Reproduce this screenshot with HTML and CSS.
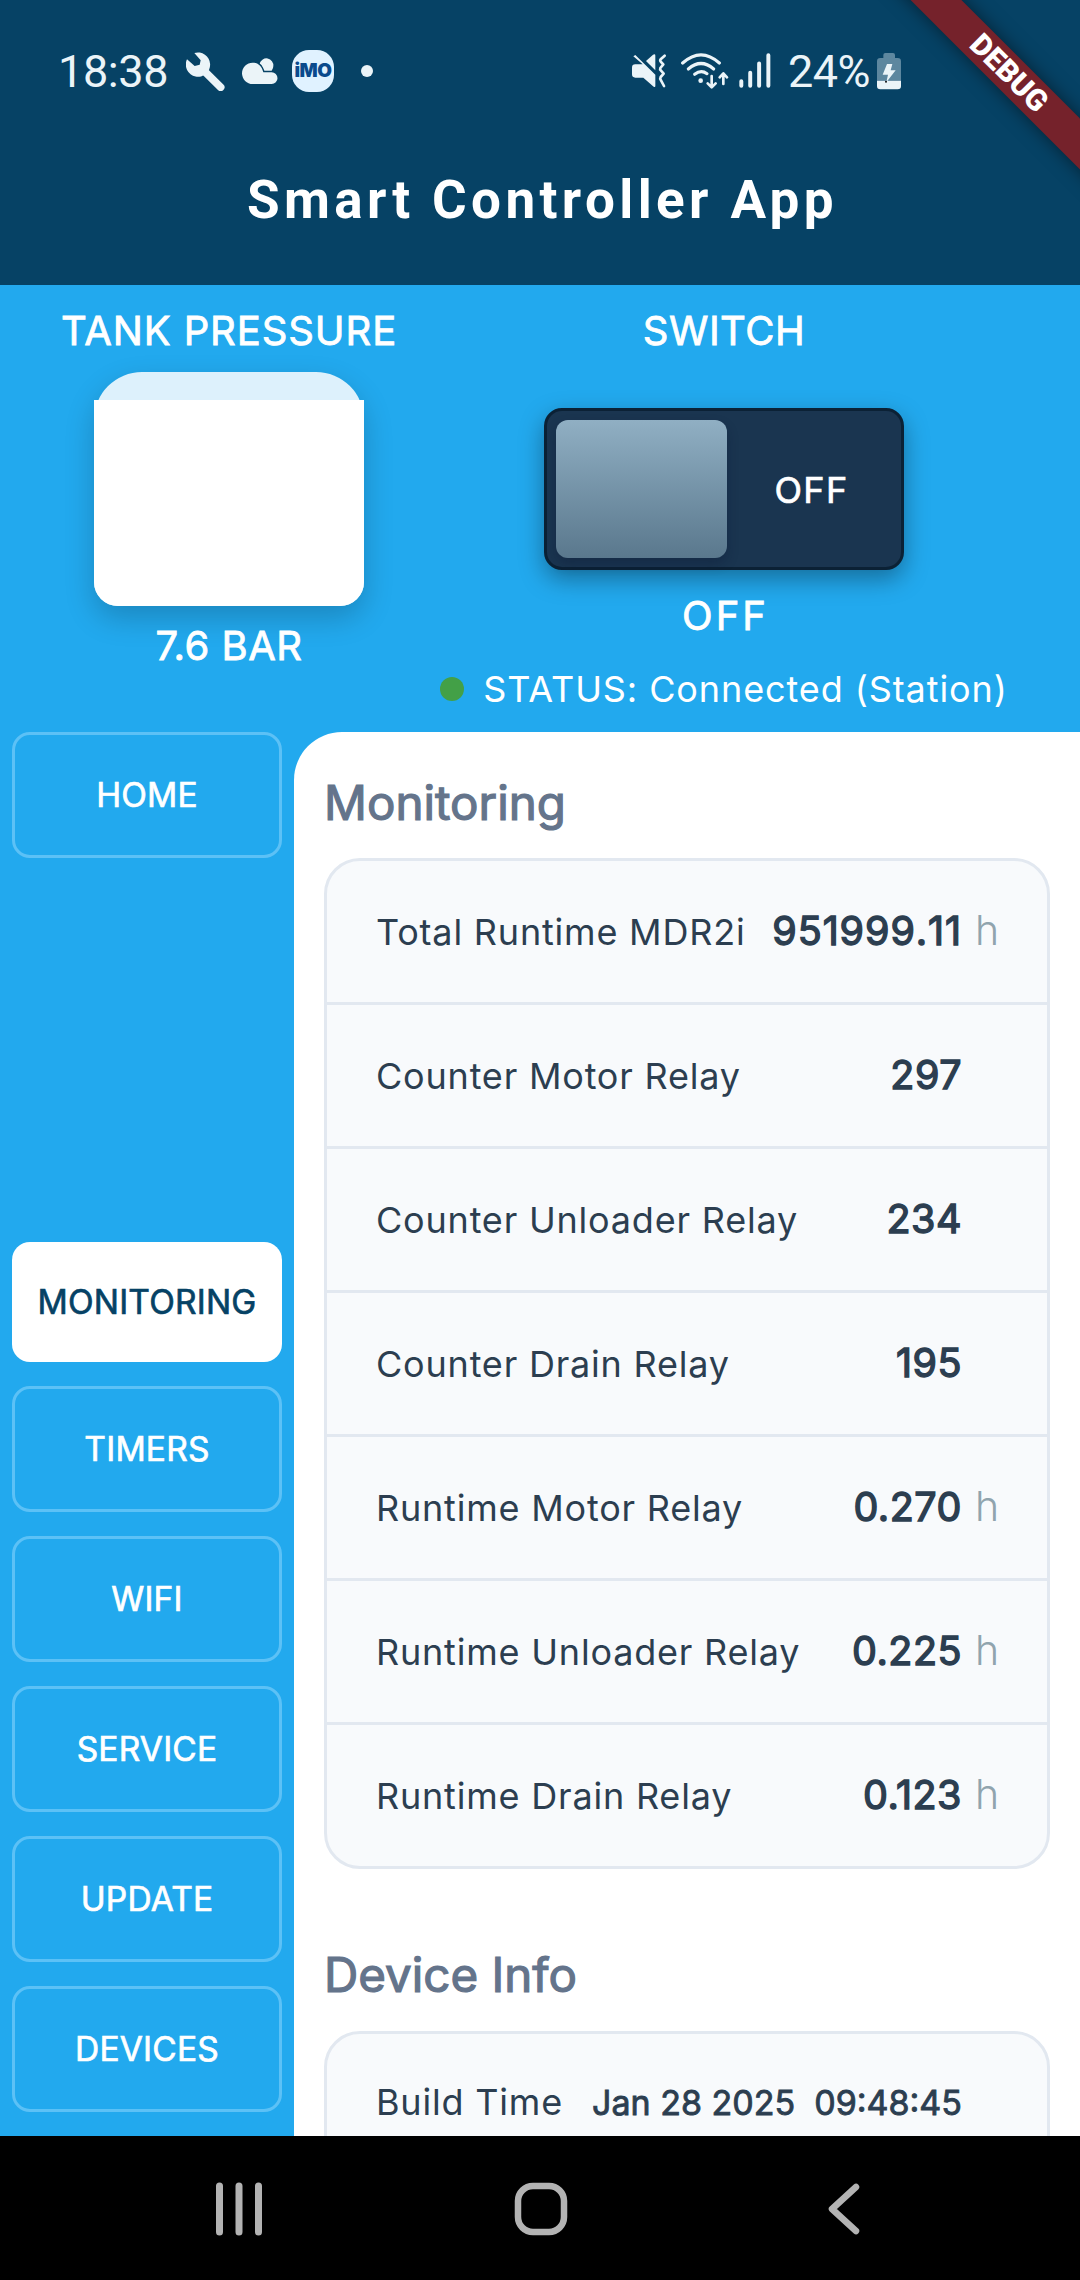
FILE: index.html
```
<!DOCTYPE html>
<html lang="en">
<head>
    <meta charset="UTF-8">
    <meta name="viewport" content="width=device-width, initial-scale=1.0">
    <title>Smart Controller App</title>
    <link rel="stylesheet" href="styles.css">
</head>
<body>
    <!-- Header Section -->
    <header>
        <div class="status-bar">
            <span class="clock">18:38</span>
            <svg class="icon-wrench" viewBox="437 63 120 120">
                <path d="M462 69 L481 91 L478 104 L463 108 L440 88 A36.500 36.500 0 1 0 462 69Z" fill="#ebf4f8"/>
                <path d="M494 125 L541 172" stroke="#ebf4f8" stroke-width="23" stroke-linecap="round"/>
            </svg>
            <svg class="icon-cloud" viewBox="605 63 108 120">
                <path d="M658 100 A21 21 0 0 1 699 108 Q699 116 694 122 H672Z" fill="#ebf4f8"/>
                <path d="M637 98 C653 98 664 107 669 127 H694 A17.500 17.500 0 0 1 694 162 H637 A32 32 0 0 1 637 98Z" fill="#ebf4f8" stroke="#064265" stroke-width="8" paint-order="stroke"/>
            </svg>
            <span class="imo">iMO</span>
            <span class="dot"></span>

            <div class="system">
                <svg class="icon-mute" viewBox="96 63 105 120">
                    <path d="M106 103 H128 L100 79 L106 75 L166 134 V168 Q166 173 161 170 L130 143 H106 Q96 143 96 133 V113 Q96 103 106 103Z" fill="#ebf4f8"/>
                    <path d="M138 93 L159 74 Q166 70 166 77 V121Z" fill="#ebf4f8"/>
                    <path d="M194 77 L182 88 Q179 92 183 96 L190 103 L181 114 Q179 118 183 122 L191 131 L182 141 Q179 146 183 151 L192 168" fill="none" stroke="#ebf4f8" stroke-width="8" stroke-linecap="round" stroke-linejoin="round"/>
                </svg>
                <svg class="icon-wifi" viewBox="243 63 144 120">
                    <g fill="none" stroke="#ebf4f8" stroke-width="9.500" stroke-linecap="round" stroke-linejoin="round">
                        <path d="M248 99 Q303 50 358 99"/>
                        <path d="M265 117 Q303 84 341 117"/>
                        <path d="M284 133 Q303 118 321 131"/>
                        <path d="M335 138 V171 M323 160 L335 172 L347 160" stroke-width="8"/>
                        <path d="M370 162 V131 M359 142 L370 130 L381 142" stroke-width="8"/>
                    </g>
                    <circle cx="302" cy="152" r="7" fill="#ebf4f8"/>
                </svg>
                <svg class="icon-signal" viewBox="417 63 97 120">
                    <path d="M424 154 V168 M451 128 V168 M478 100 V168 M506 75 V168" stroke="#ebf4f8" stroke-width="12" stroke-linecap="round"/>
                </svg>
                <span class="percent">24%</span>
                <svg class="icon-battery" viewBox="831 63 72 120">
                    <path d="M850 84 V75 Q850 69 856 69 H879 Q885 69 885 75 V84 H893 Q903 84 903 94 V152 H831 V94 Q831 84 841 84Z" fill="#5d879f"/>
                    <path d="M831 152 H903 V168 Q903 178 893 178 H841 Q831 178 831 168Z" fill="#ebf4f8"/>
                    <path d="M861 102 H877 L872 121 H887 L859 157 L864 134 H848Z" fill="#ebf4f8"/>
                    <circle cx="858" cy="155" r="3" fill="#111"/>
                </svg>
            </div>
        </div>
        <h1>Smart Controller App</h1>
        <div class="ribbon">DEBUG</div>
    </header>

    <!-- Pressure and Switch Section -->
    <section class="overview">
        <div class="tank-column">
            <div class="label tank-label">TANK PRESSURE</div>
            <div class="tank">
                <div class="tank-fill"></div>
            </div>
            <div class="label">7.6 BAR</div>
        </div>
        <div class="switch-column">
            <div class="label">SWITCH</div>
            <div class="switch">
                <div class="knob"></div>
                <span>OFF</span>
            </div>
            <div class="label switch-state">OFF</div>
            <div class="connection"><i></i>STATUS: Connected (Station)</div>
        </div>
    </section>

    <!-- Main Content Section -->
    <main>
        <nav>
            <a class="home">HOME</a>
            <a class="active">MONITORING</a>
            <a>TIMERS</a>
            <a>WIFI</a>
            <a>SERVICE</a>
            <a>UPDATE</a>
            <a>DEVICES</a>
        </nav>
        <div class="content">
            <h2 class="title-monitoring">Monitoring</h2>
            <div class="card">
                <div class="row total"><span>Total Runtime MDR2i</span><b>951999.11</b><em>h</em></div>
                <div class="row"><span>Counter Motor Relay</span><b>297</b><em>&nbsp;</em></div>
                <div class="row"><span>Counter Unloader Relay</span><b>234</b><em>&nbsp;</em></div>
                <div class="row"><span>Counter Drain Relay</span><b>195</b><em>&nbsp;</em></div>
                <div class="row"><span>Runtime Motor Relay</span><b>0.270</b><em>h</em></div>
                <div class="row"><span>Runtime Unloader Relay</span><b>0.225</b><em>h</em></div>
                <div class="row"><span>Runtime Drain Relay</span><b>0.123</b><em>h</em></div>
            </div>
            <h2 class="title-device">Device Info</h2>
            <div class="card">
                <div class="row build"><span>Build Time</span><b>Jan 28 2025&nbsp; 09:48:45</b><em></em></div>
            </div>
        </div>
    </main>

    <!-- Android navigation bar -->
    <footer>
        <svg viewBox="0 0 54 54"><path d="M7.500 4 V50 M27 4 V50 M46.500 4 V50" stroke-width="7"/></svg>
        <svg viewBox="0 0 54 54"><rect x="4" y="4" width="46" height="46" rx="15" stroke-width="6.500"/></svg>
        <svg viewBox="0 0 54 54"><path d="M40 5 L16 27 L40 49" stroke-width="6.500"/></svg>
    </footer>
</body>
</html>
```
FILE: styles.css
```
/* General Styles */
* {
    box-sizing: border-box;
}
body {
    width: 1080px;
    height: 2280px;
    margin: 0;
    display: flex;
    flex-direction: column;
    overflow: hidden;
    font-family: Inter, sans-serif;
    background-color: #22a9ee;
    color: #fff;
}

/* Header */
header {
    position: relative;
    flex: none;
    height: 285px;
    overflow: hidden;
    background-color: #064265;
}
.status-bar {
    display: flex;
    align-items: center;
    height: 142px;
    padding-left: 58px;
    font-family: Roboto, sans-serif;
    font-size: 45px;
    color: #ebf4f8;
}
.status-bar svg {
    flex: none;
    height: 40px;
}
.clock {
    width: 128px;
    letter-spacing: -0.4px;
}
.icon-wrench {
    width: 40px;
}
.icon-cloud {
    width: 36px;
    margin-left: 16px;
}
.imo {
    width: 42px;
    height: 42px;
    margin-left: 14px;
    border-radius: 17px;
    background-color: #e0f2ff;
    color: #0a4a8c;
    font-family: Inter, sans-serif;
    font-size: 19px;
    font-weight: 900;
    line-height: 42px;
    text-align: center;
    letter-spacing: -0.5px;
}
.dot {
    width: 12px;
    height: 12px;
    margin-left: 27px;
    border-radius: 50%;
    background-color: #ebf4f8;
}
.system {
    display: flex;
    align-items: center;
    margin-left: auto;
    padding-right: 179px;
}
.icon-mute {
    width: 35px;
}
.icon-wifi {
    width: 48px;
    margin-left: 14px;
}
.icon-signal {
    width: 32px;
    margin-left: 10px;
}
.percent {
    width: 82px;
    margin-left: 17px;
    letter-spacing: -0.5px;
    white-space: nowrap;
}
.icon-battery {
    width: 24px;
    margin-left: 7px;
}
h1 {
    margin: 0;
    padding: 1px 0 0 5px;
    font-family: Roboto, sans-serif;
    font-size: 53px;
    font-weight: 700;
    line-height: 114px;
    letter-spacing: 4.4px;
    text-align: center;
}
.ribbon {
    position: absolute;
    left: 858px;
    top: 54px;
    width: 300px;
    height: 36px;
    padding-left: 3px;
    background-color: #75222b;
    box-shadow: 0 0 18px rgba(0, 0, 0, 0.5);
    font-family: Roboto, sans-serif;
    font-size: 30px;
    font-weight: 900;
    line-height: 36px;
    text-align: center;
    transform: rotate(45deg);
}

/* Pressure and switch */
.overview {
    display: flex;
    flex: none;
    height: 447px;
    padding: 22px 30px 0 60px;
}
.tank-column, .switch-column {
    display: flex;
    flex-direction: column;
    align-items: center;
}
.tank-column {
    width: 338px;
}
.switch-column {
    flex: 1;
}
.label {
    font-size: 40px;
    line-height: 48px;
    letter-spacing: 0.5px;
    white-space: nowrap;
    -webkit-text-stroke: 0.02em currentColor;
}
.tank-label {
    letter-spacing: 0.9px;
}
.tank {
    width: 270px;
    height: 234px;
    margin: 17px 0 16px;
    padding-top: 28px;
    border-radius: 48px 48px 24px 24px;
    background-color: #ddf1fc;
    box-shadow: 0 12px 30px rgba(0, 0, 0, 0.2);
}
.tank-fill {
    height: 206px;
    border-radius: 0 0 24px 24px;
    background-color: #fff;
}
.switch {
    display: flex;
    align-items: center;
    width: 360px;
    height: 162px;
    margin: 53px 0 22px;
    padding-left: 9px;
    border: 3px solid #0b2135;
    border-radius: 18px;
    background-color: #1a3550;
    box-shadow: 0 9px 24px rgba(0, 0, 0, 0.35);
}
.knob {
    width: 171px;
    height: 138px;
    border-radius: 12px;
    background: linear-gradient(#90afc3, #5a788d);
    box-shadow: 0 6px 12px rgba(10, 20, 50, 0.3);
}
.switch span {
    flex: 1;
    padding: 2px 5px 0 0;
    font-size: 36px;
    letter-spacing: 1.3px;
    text-align: center;
    -webkit-text-stroke: 0.02em currentColor;
}
.switch-state {
    padding-left: 3px;
    letter-spacing: 3px;
}
.connection {
    display: flex;
    align-items: center;
    margin-top: 25px;
    font-size: 36px;
    line-height: 48px;
    letter-spacing: 0.9px;
    white-space: nowrap;
}
.connection i {
    width: 24px;
    height: 24px;
    margin-right: 19px;
    border-radius: 50%;
    background-color: #43a047;
}

/* Main */
main {
    display: flex;
    flex: none;
    height: 1404px;
    overflow: hidden;
}
nav {
    display: flex;
    flex-direction: column;
    gap: 24px;
    width: 294px;
    padding: 0 12px 24px;
}
nav a {
    height: 126px;
    border: 3px solid #5cc1f6;
    border-radius: 18px;
    font-size: 33.5px;
    line-height: 120px;
    letter-spacing: 0.2px;
    text-align: center;
    -webkit-text-stroke: 0.02em currentColor;
}
nav .home {
    margin-bottom: auto;
}
nav .active {
    height: 120px;
    border: 0;
    background-color: #fff;
    color: #064265;
}
.content {
    flex: 1;
    padding: 0 30px;
    border-top-left-radius: 48px;
    background-color: #fff;
}
h2 {
    margin: 0;
    font-size: 47.5px;
    font-weight: 400;
    line-height: 60px;
    color: #64748b;
    -webkit-text-stroke: 0.025em currentColor;
}
.title-monitoring {
    padding: 41px 0 25px;
}
.title-device {
    padding: 76px 0 26px;
}
.card {
    border: 3px solid #e2e8f0;
    border-radius: 36px;
    background-color: #f8fafc;
    color: #2c3e50;
}
.row {
    display: flex;
    align-items: baseline;
    height: 141px;
    padding: 44px 0 0 49px;
    line-height: 51px;
    white-space: nowrap;
}
.row + .row {
    height: 144px;
    border-top: 3px solid #e2e8f0;
}
.row span {
    flex: 1;
    font-size: 36px;
    letter-spacing: 0.8px;
}
.row b {
    font-size: 39.5px;
    font-weight: 400;
    letter-spacing: 0.5px;
    -webkit-text-stroke: 0.035em currentColor;
}
.row em {
    width: 85px;
    padding-left: 13px;
    font-size: 41px;
    font-style: normal;
    font-weight: 300;
    color: #90a4ae;
}
.total b {
    font-kerning: none;
    letter-spacing: 0.9px;
}
.build {
    padding-top: 43px;
}
.build b {
    font-size: 34px;
    letter-spacing: 0;
    -webkit-text-stroke: 0.025em currentColor;
}

/* Footer */
footer {
    display: flex;
    justify-content: space-between;
    height: 144px;
    padding: 46px 210px 0 212px;
    background-color: #000;
}
footer svg {
    width: 54px;
    height: 54px;
    fill: none;
    stroke: #b3b3b3;
    stroke-linecap: round;
    stroke-linejoin: round;
}
```
